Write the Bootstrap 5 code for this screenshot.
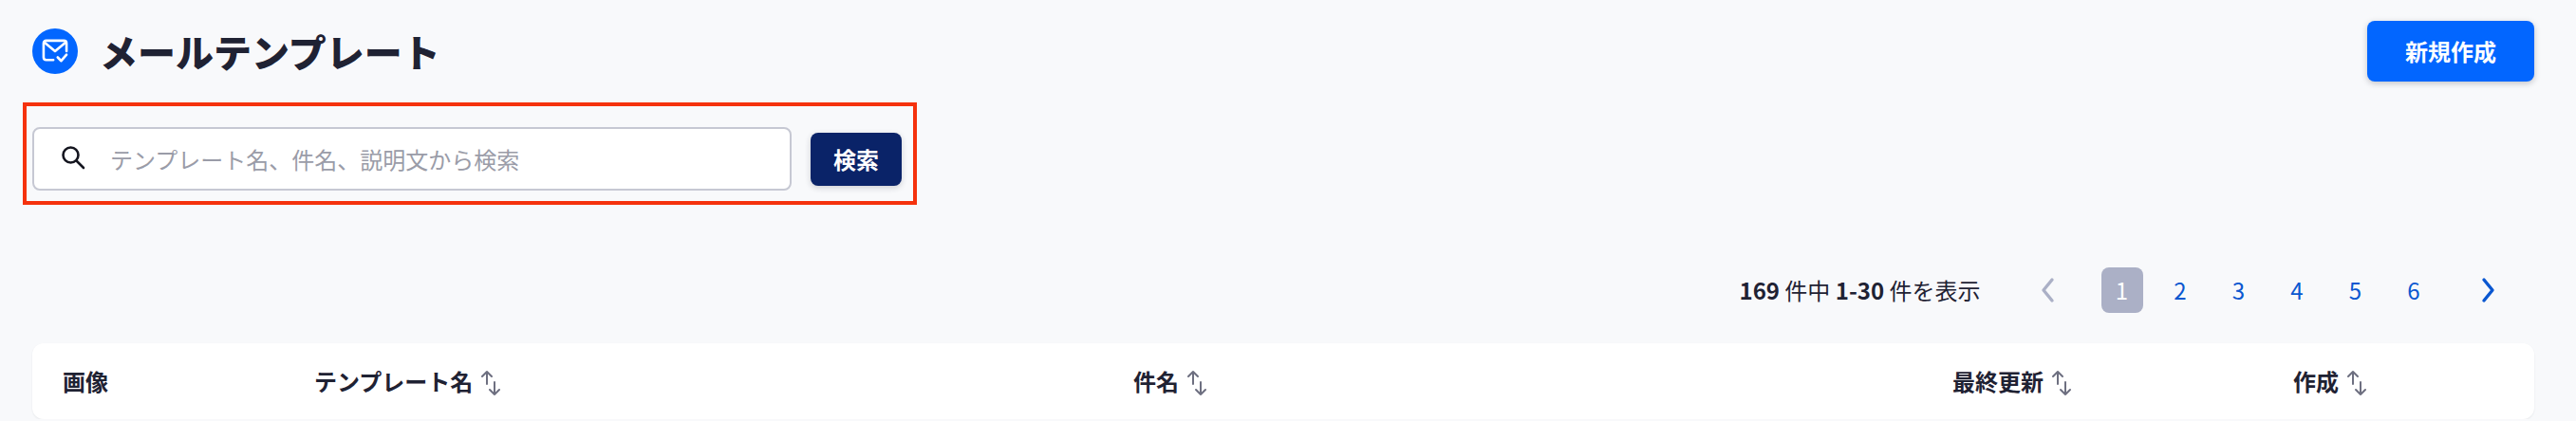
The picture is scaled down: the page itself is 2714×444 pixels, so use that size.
<!DOCTYPE html>
<html lang="ja">
<head>
    <meta charset="UTF-8">
    <meta name="viewport" content="width=device-width, initial-scale=1.0">
    <title>メールテンプレート</title>
    <link href="https://cdn.jsdelivr.net/npm/bootstrap@5.3.0/dist/css/bootstrap.min.css" rel="stylesheet">
    <style>
        body { background: #f8f9fb; color: #1f2233; font-family: "Noto Sans CJK JP", "Noto Sans", sans-serif; overflow: hidden; }
        .page-wrap { padding: 22px 44px 0 34px; }
        .title-icon { width: 48px; height: 48px; background: #0266ff; border-radius: 50%; }
        .page-title { font-size: 40px; font-weight: 900; line-height: 64px; margin: 0 0 0 23px; color: #1f2233; }
        .btn-new { width: 176px; height: 64px; background: #0266ff; color: #fff; font-size: 24px; font-weight: 700; border: 0; border-radius: 8px; box-shadow: 0 2px 6px rgba(31,34,51,.25); }
        .search-mark { margin: 22px 0 0 -10px; width: 942px; height: 108px; border: 4px solid #f5320d; padding: 22px 12px 11px 6px; }
        .search-box { width: 800px; height: 67px; background: #fff; border: 2px solid #c6c8d3; border-radius: 8px; padding-left: 28px; }
        .search-box svg { margin-bottom: 4px; }
        .search-box input { border: 0; outline: 0; background: transparent; font-size: 24px; color: #1f2233; margin-left: 26px; flex: 1; padding: 0; }
        .search-box input::placeholder { color: #9a9ca8; }
        .btn-search { width: 96px; height: 56px; margin-left: 20px; background: #0a2368; color: #fff; font-size: 24px; font-weight: 700; border: 0; border-radius: 8px; box-shadow: 0 2px 6px rgba(31,34,51,.2); padding: 0; }
        .pager-row { margin-top: 66px; height: 48px; }
        .pager-count { font-size: 24px; margin-right: 49px; }
        .pager-arrow { width: 44px; height: 48px; }
        .pager-num { width: 44px; height: 48px; margin-left: 17.5px; font-size: 24px; color: #0a57d0; text-decoration: none; border-radius: 8px; }
        .pager-num.current { background: #abb0c6; color: #fff; }
        .pager-num.pager-first { margin-left: 34px; }
        .pager-next { margin-left: 34px; margin-right: 27px; }
        .list-card { margin-top: 32px; height: 80px; background: #fff; border-radius: 12px; box-shadow: 0 1px 2px rgba(31,34,51,.08); }
        .list-table { width: 2636px; table-layout: fixed; margin: 0; background: transparent; }
        .list-table th { height: 80px; padding: 0 0 0 32px; font-size: 24px; font-weight: 700; border: 0; background: transparent; vertical-align: middle; color: #1f2233; }
        .sort-icon { margin-left: 8px; vertical-align: -6px; }
    </style>
</head>
<body>
    <div class="page-wrap">
        <div class="d-flex justify-content-between align-items-center">
            <div class="d-flex align-items-center">
                <div class="title-icon d-flex align-items-center justify-content-center">
                    <svg width="28" height="26" viewBox="0 0 30 28" fill="none" stroke="#fff" stroke-width="2.800" stroke-linecap="round" stroke-linejoin="round">
                        <path d="M13 24H5Q2 24 2 21V5Q2 2 5 2H25Q28 2 28 5V14"/>
                        <path d="M3 4l12 10L27 4"/>
                        <path d="M18 21l4 4 6-7"/>
                    </svg>
                </div>
                <h1 class="page-title">メールテンプレート</h1>
            </div>
            <button class="btn-new">新規作成</button>
        </div>

        <div class="search-mark d-flex align-items-center">
            <div class="search-box d-flex align-items-center">
                <svg width="26" height="26" viewBox="0 0 26 26" fill="none" stroke="#14151f" stroke-width="2.600" stroke-linecap="round">
                    <circle cx="10.500" cy="10.500" r="8"/>
                    <path d="M17 17l7 7"/>
                </svg>
                <input type="text" placeholder="テンプレート名、件名、説明文から検索">
            </div>
            <button class="btn-search">検索</button>
        </div>

        <div class="pager-row d-flex justify-content-end align-items-center">
            <div class="pager-count"><b>169</b> 件中 <b>1-30</b> 件を表示</div>
            <div class="pager-arrow d-flex align-items-center justify-content-center">
                <svg width="18" height="28" viewBox="0 0 18 28" fill="none" stroke="#abb0c6" stroke-width="3.400" stroke-linecap="round" stroke-linejoin="round"><path d="M13 3L4 14l9 11"/></svg>
            </div>
            <a class="pager-num current pager-first d-flex align-items-center justify-content-center" href="#">1</a>
            <a class="pager-num d-flex align-items-center justify-content-center" href="#">2</a>
            <a class="pager-num d-flex align-items-center justify-content-center" href="#">3</a>
            <a class="pager-num d-flex align-items-center justify-content-center" href="#">4</a>
            <a class="pager-num d-flex align-items-center justify-content-center" href="#">5</a>
            <a class="pager-num d-flex align-items-center justify-content-center" href="#">6</a>
            <div class="pager-arrow pager-next d-flex align-items-center justify-content-center">
                <svg width="18" height="28" viewBox="0 0 18 28" fill="none" stroke="#0a57d0" stroke-width="3.400" stroke-linecap="round" stroke-linejoin="round"><path d="M5 3l9 11-9 11"/></svg>
            </div>
        </div>

        <div class="list-card">
            <table class="table list-table">
                <colgroup><col style="width:265px"><col style="width:863px"><col style="width:863px"><col style="width:359px"><col></colgroup>
                <thead>
                    <tr>
                        <th>画像</th>
                        <th>テンプレート名<svg class="sort-icon" width="22" height="28" viewBox="0 0 22 28" fill="none" stroke="#6d6f80" stroke-width="2" stroke-linecap="round" stroke-linejoin="round"><path d="M7 15V2M2 7l5-5 5 5M15 13v13M10 21l5 5 5-5"/></svg></th>
                        <th>件名<svg class="sort-icon" width="22" height="28" viewBox="0 0 22 28" fill="none" stroke="#6d6f80" stroke-width="2" stroke-linecap="round" stroke-linejoin="round"><path d="M7 15V2M2 7l5-5 5 5M15 13v13M10 21l5 5 5-5"/></svg></th>
                        <th>最終更新<svg class="sort-icon" width="22" height="28" viewBox="0 0 22 28" fill="none" stroke="#6d6f80" stroke-width="2" stroke-linecap="round" stroke-linejoin="round"><path d="M7 15V2M2 7l5-5 5 5M15 13v13M10 21l5 5 5-5"/></svg></th>
                        <th>作成<svg class="sort-icon" width="22" height="28" viewBox="0 0 22 28" fill="none" stroke="#6d6f80" stroke-width="2" stroke-linecap="round" stroke-linejoin="round"><path d="M7 15V2M2 7l5-5 5 5M15 13v13M10 21l5 5 5-5"/></svg></th>
                    </tr>
                </thead>
            </table>
        </div>
    </div>
    <script src="https://cdn.jsdelivr.net/npm/bootstrap@5.3.0/dist/js/bootstrap.bundle.min.js"></script>
</body>
</html>
